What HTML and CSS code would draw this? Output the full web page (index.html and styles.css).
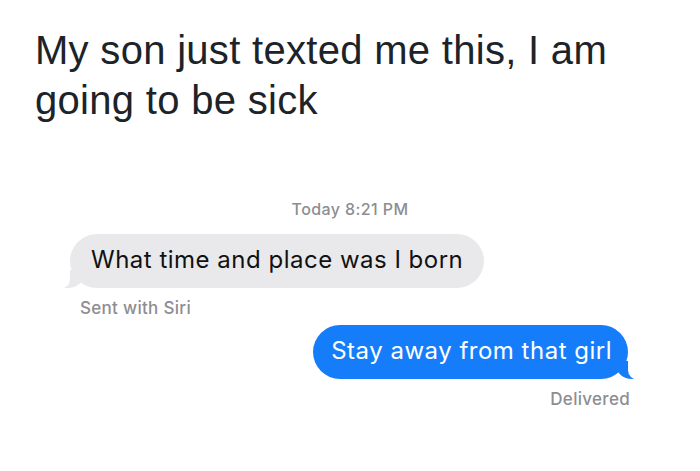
FILE: index.html
```html
<!DOCTYPE html>
<html>
<head>
<meta charset="utf-8">
<link rel="stylesheet" href="styles.css">
</head>
<body>
<h1 class="title">My son just texted me this, I am going to be sick</h1>
<section class="chat">
  <div class="stamp">Today 8:21 PM</div>
  <div class="row row-in">
    <div class="bubble bubble-in">What time and place was I born</div>
  </div>
  <div class="note note-in">Sent with Siri</div>
  <div class="row row-out">
    <div class="bubble bubble-out">Stay away from that girl</div>
  </div>
  <div class="note note-out">Delivered</div>
</section>
</body>
</html>
```
FILE: styles.css
```css
html, body { margin: 0; padding: 0; background: #fff; }
body { width: 700px; height: 471px; overflow: hidden; }

.title {
  margin: 0;
  padding: 25px 35px 0 35px;
  width: 620px;
  font-family: "Liberation Sans", Arial, sans-serif;
  font-weight: normal;
  font-size: 40px;
  letter-spacing: 0.3px;
  line-height: 50px;
  color: #1c2329;
}

.chat {
  display: flex;
  flex-direction: column;
  margin-top: 74px;
  font-family: Inter, "Liberation Sans", sans-serif;
}

.stamp {
  align-self: center;
  font-size: 16px;
  letter-spacing: 0.4px;
  font-weight: 500;
  color: #8d8d92;
  line-height: 20px;
}

.row { display: flex; }
.row-in { padding-left: 70px; margin-top: 15px; }
.row-out { justify-content: flex-end; padding-right: 72px; margin-top: 7px; }

.bubble {
  position: relative;
  font-size: 24px;
  letter-spacing: 0.5px;
  line-height: 28px;
  padding: 12px 21px 14px 21px;
  border-radius: 27px;
}
.bubble-in { background: #e9e9eb; color: #111; }
.bubble-out { background: #167dfa; color: #fff; padding: 12px 16px 14px 18px; }

.bubble-in::before {
  content: "";
  position: absolute;
  left: -6px;
  bottom: 0;
  width: 20px;
  height: 18px;
  background: #e9e9eb;
  border-bottom-right-radius: 16px 14px;
}
.bubble-in::after {
  content: "";
  position: absolute;
  left: -12px;
  bottom: -1px;
  width: 12px;
  height: 20px;
  background: #fff;
  border-bottom-right-radius: 10px;
}
.bubble-out::before {
  content: "";
  position: absolute;
  right: -8px;
  bottom: 0;
  width: 20px;
  height: 18px;
  background: #167dfa;
  border-bottom-left-radius: 16px 14px;
}
.bubble-out::after {
  content: "";
  position: absolute;
  right: -12px;
  bottom: -1px;
  width: 12px;
  height: 20px;
  background: #fff;
  border-bottom-left-radius: 10px;
}

.note {
  font-size: 17px;
  letter-spacing: 0.3px;
  font-weight: 500;
  color: #8d8d92;
  line-height: 20px;
}
.note-in { padding-left: 80px; margin-top: 10px; }
.note-out { align-self: flex-end; padding-right: 70px; margin-top: 10px; }
```
